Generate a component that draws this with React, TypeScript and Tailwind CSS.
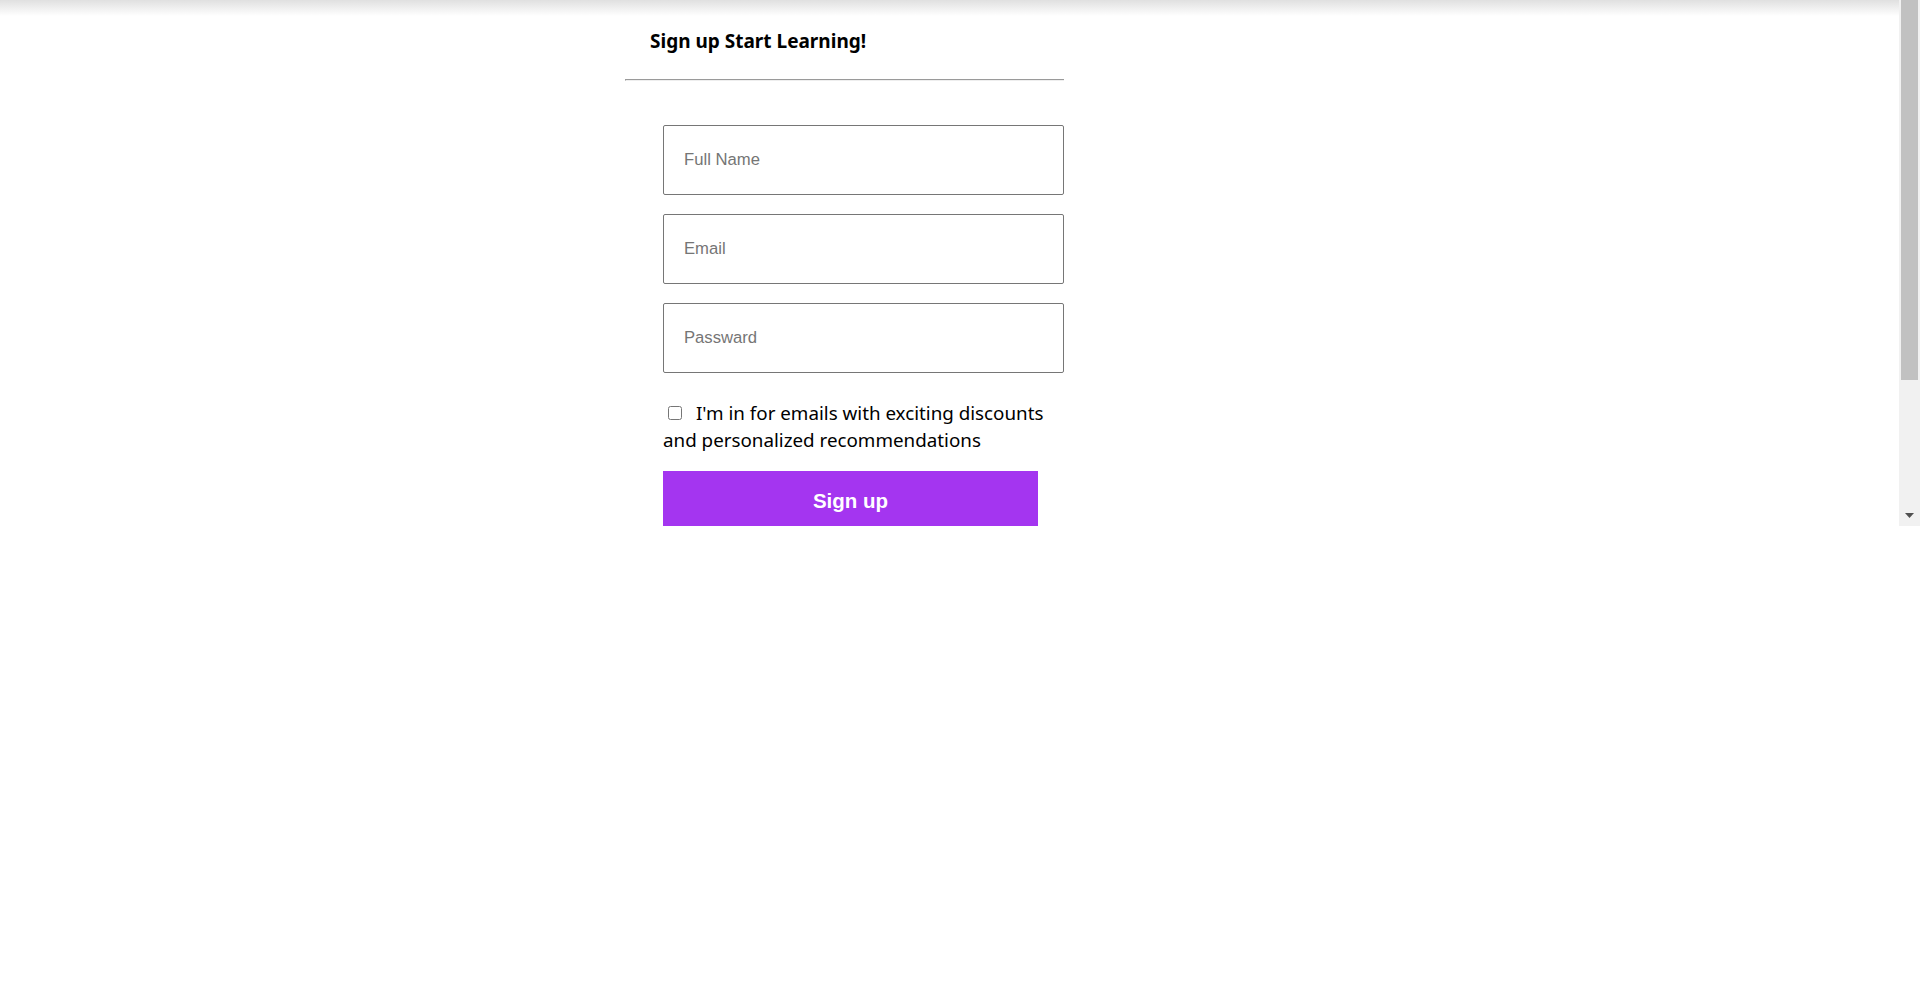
import React from "react";

export default function App() {
  const segoe = { fontFamily: '"Noto Sans", "Open Sans", sans-serif' };
  return (
    <div className="w-[1920px] h-[987px] bg-white">
      <div className="flex h-[526px]">
        <div className="relative flex-1 overflow-hidden">
          <div className="absolute top-0 left-0 right-0 h-[16px] bg-[linear-gradient(to_bottom,#e0e0e0,#ffffff00)]" />
          <div className="ml-[625px] w-[439px]">
            <h2
              className="pl-[25px] pt-[28px] text-[19px] font-bold leading-[27px] text-black"
              style={segoe}
            >
              Sign up Start Learning!
            </h2>
            <div className="mt-[24px] h-[2px] border-t border-l border-b border-t-[#9a9a9a] border-l-[#9a9a9a] border-b-[#eeeeee]" />
            <form className="pl-[38px] pt-[44px]" onSubmit={(e) => e.preventDefault()}>
              <div className="flex flex-col gap-[19px]">
                {["Full Name", "Email", "Passward"].map((p) => (
                  <input
                    key={p}
                    type={p === "Passward" ? "password" : p === "Email" ? "email" : "text"}
                    placeholder={p}
                    className="h-[70px] w-[401px] rounded-[2px] border border-[#767676] bg-white pl-[20px] text-[16.67px] text-black placeholder:text-[#757575] outline-none"
                    style={{ fontFamily: '"Liberation Sans", Arial, sans-serif' }}
                  />
                ))}
              </div>
              <p
                className="mt-[27px] w-[401px] whitespace-nowrap text-[18.8px] leading-[27px] text-black"
                style={segoe}
              >
                <input
                  type="checkbox"
                  className="ml-[5px] mr-[14px] mb-[1px] h-[14px] w-[14px] align-baseline"
                />
                I'm in for emails with exciting discounts
                <br />
                and personalized recommendations
              </p>
              <button
                type="submit"
                className="mt-[17px] h-[60px] w-[375px] bg-[#a435f0] text-[20.5px] font-bold text-white"
                style={{ fontFamily: '"Liberation Sans", Arial, sans-serif' }}
              >
                Sign up
              </button>
              <div className="h-[200px]" />
            </form>
          </div>
        </div>
        <div className="flex w-[21px] flex-col bg-[#f1f1f1]">
          <div className="mx-[2px] h-[380px] bg-[#c1c1c1]" />
          <div className="flex-1" />
          <div className="flex h-[21px] items-center justify-center">
            <svg width="9" height="5" viewBox="0 0 9 5">
              <path d="M0 0 H9 L4.5 5 Z" fill="#505050" />
            </svg>
          </div>
        </div>
      </div>
    </div>
  );
}
